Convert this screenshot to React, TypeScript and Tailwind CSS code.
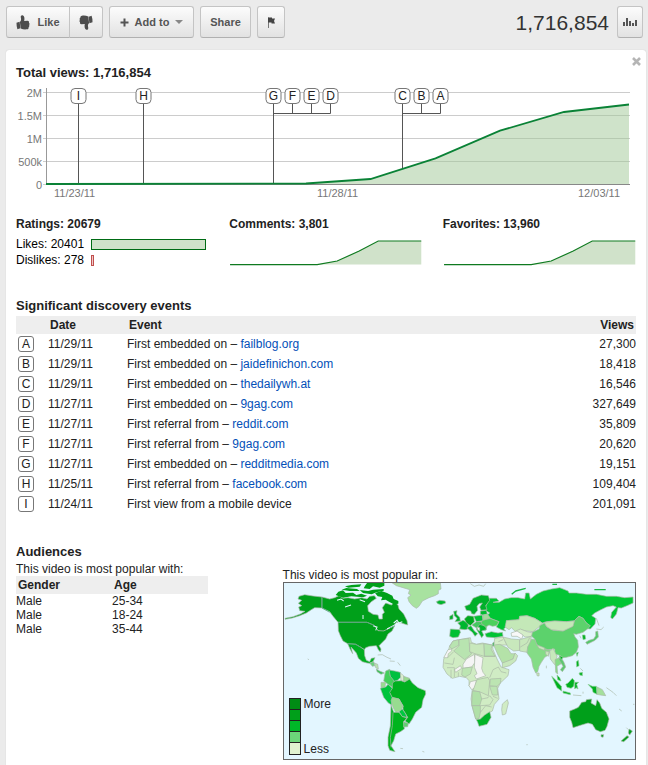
import { useState } from 'react';

interface DiscoveryEvent {
  id: string;
  date: string;
  label: string;
  site?: string;
  views: string;
}

const events: DiscoveryEvent[] = [
  { id: 'A', date: '11/29/11', label: 'First embedded on', site: 'failblog.org', views: '27,300' },
  { id: 'B', date: '11/29/11', label: 'First embedded on', site: 'jaidefinichon.com', views: '18,418' },
  { id: 'C', date: '11/29/11', label: 'First embedded on', site: 'thedailywh.at', views: '16,546' },
  { id: 'D', date: '11/27/11', label: 'First embedded on', site: '9gag.com', views: '327,649' },
  { id: 'E', date: '11/27/11', label: 'First referral from', site: 'reddit.com', views: '35,809' },
  { id: 'F', date: '11/27/11', label: 'First referral from', site: '9gag.com', views: '20,620' },
  { id: 'G', date: '11/27/11', label: 'First embedded on', site: 'redditmedia.com', views: '19,151' },
  { id: 'H', date: '11/25/11', label: 'First referral from', site: 'facebook.com', views: '109,404' },
  { id: 'I', date: '11/24/11', label: 'First view from a mobile device', views: '201,091' },
];

const audiences = [
  { gender: 'Male', age: '25-34' },
  { gender: 'Male', age: '18-24' },
  { gender: 'Male', age: '35-44' },
];

const ratings = [
  { name: 'Likes', count: 20401, bar: 'border-[#006b14] bg-[#d0e2ca]' },
  { name: 'Dislikes', count: 278, bar: 'border-[#c0504d] bg-[#f0c8c8]' },
];

const yTicks = [
  { label: '2M', y: 8.5 },
  { label: '1.5M', y: 31.5 },
  { label: '1M', y: 54.5 },
  { label: '500k', y: 77.5 },
  { label: '0', y: 100.5 },
];

const xTicks = [
  { label: '11/23/11', x: 38 },
  { label: '11/28/11', x: 301 },
  { label: '12/03/11', x: 562 },
];

const markers = [
  { id: 'I', x: 62.5 },
  { id: 'H', x: 127.5 },
  { id: 'G', x: 257.5 },
  { id: 'F', x: 276.5 },
  { id: 'E', x: 295.5 },
  { id: 'D', x: 314.5 },
  { id: 'C', x: 386.5 },
  { id: 'B', x: 405.5 },
  { id: 'A', x: 424.5 },
];

const button =
  'flex h-8 items-center justify-center border border-[#c4c4c4] border-b-[#b0b0b0] bg-linear-to-b from-[#fcfcfc] to-[#e2e2e2] text-[11px] font-bold text-[#555]';

function ThumbIcon({ down = false }: { down?: boolean }) {
  return (
    <svg
      viewBox="0 0 14 15"
      className={down ? 'h-[15px] w-[14px] rotate-180' : 'h-[15px] w-[14px]'}
      fill="#4d4d4d"
      aria-hidden="true"
    >
      <path d="M0.5 7.8L3.6 6.8L4.4 13.2L1.4 14.2Q0.4 11.5 0.5 7.8Z" />
      <path d="M3.9 7C5.2 5.8 5.3 4.6 4.8 2.6C4.5 1 5.4 0.1 6.6 0.3C8.4 0.7 8.8 3.4 8.2 5.9L11.6 5.8C12.8 5.8 13.4 6.9 12.9 7.8C13.7 8.4 13.7 9.5 13.1 10.1C13.6 11 13.3 11.8 12.6 12.2C12.8 13.3 12.2 14.2 11 14.3C8.9 14.6 6.6 14.4 4.7 13.4Z" />
    </svg>
  );
}

function Toolbar() {
  return (
    <header className="flex items-start gap-1.5 pr-[3px]">
      <div className="flex">
        <button className={`${button} w-[64px] gap-[7px] rounded-l-[3px]`}>
          <ThumbIcon />
          Like
        </button>
        <button aria-label="Dislike" className={`${button} -ml-px w-[34px] rounded-r-[3px]`}>
          <ThumbIcon down />
        </button>
      </div>
      <button className={`${button} w-[85px] gap-1.5 rounded-[3px]`}>
        <svg viewBox="0 0 9 9" className="h-[9px] w-[9px]" aria-hidden="true">
          <path d="M4.5 0.5V8.5M0.5 4.5H8.5" stroke="#555" strokeWidth="2" />
        </svg>
        Add to
        <svg viewBox="0 0 8 4" className="h-1 w-2" aria-hidden="true">
          <path d="M0 0H8L4 4Z" fill="#888" />
        </svg>
      </button>
      <button className={`${button} w-[51px] rounded-[3px]`}>Share</button>
      <button aria-label="Flag" className={`${button} w-7 rounded-[3px]`}>
        <svg viewBox="0 0 7 11" className="h-[11px] w-[7px]" aria-hidden="true">
          <path d="M0.5 0.5V11" stroke="#777" />
          <path d="M0 0.5H4V1.5H7L6 4L7 6.5H3.5V5.5H0Z" fill="#444" />
        </svg>
      </button>
      <span className="ml-auto text-[21px] leading-[34px] -mb-0.5 text-[#333]">1,716,854</span>
      <button aria-label="Statistics" className={`${button} ml-0.5 w-[26px] rounded-[3px]`}>
        <svg viewBox="0 0 14 10" className="h-[10px] w-[14px]" fill="#555" aria-hidden="true">
          <path d="M0 5h2v4H0zM3 1h2v8H3zM6 4h2v5H6zM9 6h2v3H9zM12 3h2v6h-2z" />
        </svg>
      </button>
    </header>
  );
}

function ViewsChart() {
  return (
    <svg viewBox="0 0 620 116" className="mt-[3px] block w-full" role="img" aria-label="Total views over time">
      {yTicks.map((t) => (
        <g key={t.label}>
          <path d={`M27 ${t.y}H614`} stroke="#ccc" />
          <text x="26" y={t.y + 4} textAnchor="end" fontSize="11" fill="#777">
            {t.label}
          </text>
        </g>
      ))}
      <path d="M30.5 4V101" stroke="#999" />
      {/* stems that tie the lettered markers to their date */}
      <path
        d="M62.5 20V100M127.5 20V100M257.5 20V100M257.5 29.5H314.5V20M276.5 20V29M295.5 20V29M386.5 20V84M386.5 29.5H424.5V20M405.5 20V29"
        fill="none"
        stroke="#555"
      />
      <path d="M30 100L290 99L354.5 95L419.5 74.3L484 46.7L548 28L613 20.5V100Z" fill="#a0c896" fillOpacity="0.5" />
      <path d="M30 100.5H614" stroke="#888" />
      <path
        d="M30 100L290 99.5L354.5 95L419.5 74.3L484 46.7L548 28L613 20.5"
        fill="none"
        stroke="#0a8236"
        strokeWidth="1.8"
      />
      {markers.map((m) => (
        <g key={m.id}>
          <rect x={m.x - 7.5} y="4.5" width="15" height="15" rx="4" fill="#fff" stroke="#777" />
          <text x={m.x} y="16" textAnchor="middle" fontSize="12" fill="#222">
            {m.id}
          </text>
        </g>
      ))}
      {xTicks.map((t) => (
        <text key={t.label} x={t.x} y="113" fontSize="11" fill="#777">
          {t.label}
        </text>
      ))}
    </svg>
  );
}

function Sparkline({ title }: { title: string }) {
  return (
    <div>
      <h3 className="text-[12px] leading-4 font-bold">{title}</h3>
      <svg viewBox="0 0 193 26" className="mt-2 block w-full" aria-hidden="true">
        <path d="M1 24.5H88L108 21L130 11L149 1H192V24.5Z" fill="#d0e2ca" />
        <path d="M1 24.5H88L108 21L130 11L149 1H192" fill="none" stroke="#0f7a20" strokeWidth="1.2" />
      </svg>
    </div>
  );
}

function Ratings() {
  return (
    <div>
      <h3 className="text-[12px] leading-4 font-bold">Ratings: 20679</h3>
      <div className="mt-1">
        {ratings.map((r) => (
          <div key={r.name} className="flex h-4 items-center text-[12px] leading-4 text-black">
            <span className="w-[75px] shrink-0">
              {r.name}: {r.count}
            </span>
            <span className="w-[115px]">
              <span
                className={`block h-[11px] min-w-[3px] border ${r.bar}`}
                style={{ width: `${(r.count / ratings[0].count) * 100}%` }}
              />
            </span>
          </div>
        ))}
      </div>
    </div>
  );
}

function EventsTable() {
  return (
    <section className="mt-[30px]">
      <h2 className="text-[13px] leading-4 font-bold">Significant discovery events</h2>
      <table className="mt-0.5 w-full text-left text-[12px]">
        <thead className="bg-[#eee] leading-[18px]">
          <tr>
            <th className="w-8" />
            <th className="w-[79px] p-0 pl-0.5 font-bold">Date</th>
            <th className="p-0 pl-0.5 font-bold">Event</th>
            <th className="p-0 pr-0.5 text-right font-bold">Views</th>
          </tr>
        </thead>
        <tbody className="leading-5">
          {events.map((e) => (
            <tr key={e.id} className="h-5">
              <td className="p-0 pl-0.5">
                <span className="flex h-4 w-4 items-center justify-center rounded-[3px] border border-[#777] leading-none">
                  {e.id}
                </span>
              </td>
              <td className="p-0">{e.date}</td>
              <td className="p-0">
                {e.label}
                {e.site && (
                  <>
                    {' – '}
                    <a href="#" className="text-[#0350b8]">
                      {e.site}
                    </a>
                  </>
                )}
              </td>
              <td className="p-0 text-right">{e.views}</td>
            </tr>
          ))}
        </tbody>
      </table>
    </section>
  );
}

function WorldMap() {
  return (
    <svg viewBox="13 52 1054 528" className="block w-full" role="img" aria-label="World map of popularity">
      <path d="M13 52H1067V580H13Z" fill="#e3f6ff" />
      <g stroke="#aab8aa" strokeWidth="2" strokeLinejoin="round">
        {/* Greenland, Iceland */}
        <path fill="#a8e2a0" d="M338 52H482L484 70L476 74V84L465 90L448 96L428 106L418 122L410 128L398 120L388 108L384 96L394 88L386 84L390 72L370 66L350 60Z" />
        <path fill="#00b62e" d="M470 108L480 104L496 106L498 112L484 117L474 114Z" />
        {/* Canada, Alaska, USA */}
        <path fill="#00a01a" d="M58 92L75 87L100 91L127 94V127L105 126L95 132L80 142L60 150L38 157L16 161V158L40 153L62 145L76 137L60 135L57 124L66 120L56 113L66 104L55 100Z" />
        <path fill="#00a01a" d="M127 94L150 100L165 96L178 90L190 98L205 96L225 100L245 96L262 100L270 92L284 90L290 98L275 108L264 120L266 137L280 146L295 148L298 160H308V146L314 140L308 126L318 112L335 118L345 110L355 118L358 130L372 145L382 165L384 178L365 172L350 170L342 180L330 188L310 197L295 195L285 180L262 170H175L160 152L150 138L127 127Z" />
        <path fill="#00a01a" d="M175 170H262L285 180L295 195L312 196L330 187L345 180L337 196L325 205L318 220L306 232L298 240L304 250L302 259L296 252L290 240L270 242L258 246L254 252L245 246L228 236L204 234L190 226L182 210L176 195Z" />
        {/* Mexico and Central America */}
        <path fill="#00ae22" d="M204 234L228 236L245 246L254 252L255 270L260 284L270 288L275 278L286 276L280 288L270 293L262 292L248 288L236 278L230 262L214 244L219 264L211 250Z" />
        <path fill="#6cd080" d="M270 292L282 288L286 300L278 302Z" />
        <path fill="#b8e4b0" d="M284 292L294 296L296 310L288 306Z" />
        <path fill="#38c058" d="M290 310L300 316L314 322L304 326L292 318Z" />
        <path fill="none" d="M294 268L308 267L322 275L334 280M330 286L345 287M354 290L362 300" />
        {/* South America */}
        <path fill="#44cf5c" d="M318 316L330 311L332 330L344 345L340 366L325 356L312 346L315 328Z" />
        <path fill="#00c040" d="M328 313L345 316L362 320L364 334L352 345L344 347L332 332Z" />
        <path fill="#dcefd0" d="M362 322L372 330V347L364 345Z" />
        <path fill="#98dc90" d="M372 332L390 338L386 348L372 347Z" />
        <path fill="#98dc90" d="M304 350L318 350L316 364L304 366Z" />
        <path fill="#00c43c" d="M302 368L318 364L325 356L338 368L332 382L338 395L336 418L326 412L312 395Z" />
        <path fill="#00b020" d="M338 352L346 346L364 345L375 349L390 340L398 352L415 366L437 375L438 385L430 402L426 425L408 440L398 460L388 475L376 466L384 455L370 432V420L358 400L338 396L330 380L338 368Z" />
        <path fill="#98dc90" d="M338 395L358 400L370 422L364 435L348 440L340 425L334 405Z" />
        <path fill="#00c840" d="M358 438L368 430L378 445L382 455L368 453Z" />
        <path fill="#00b41e" d="M334 418L342 440H358L368 453L382 456L372 468L374 490L362 498L348 505L342 525L334 540L346 558L330 554L325 540V515L332 480Z" />
        <path fill="#60d070" d="M372 468L386 473L384 483L372 484Z" />
        <path fill="none" d="M340 440L338 480L332 515L334 545M362 548L370 549M428 557L434 559M84 280L88 282" />
      </g>
      {/* Arctic archipelago */}
      <g fill="#00a01a">
        <path d="M168 88L176 78L190 74L198 82L220 81L230 88L245 84L262 90L250 95L215 92L190 96Z" />
        <path d="M186 72L200 67L232 70L240 76H210Z" />
        <path d="M196 62L215 58L245 56L240 63L206 66Z" />
        <path d="M262 52H314V60L300 66L280 62L270 70L252 68L256 60Z" />
        <path d="M240 73L265 76L280 72L312 70V75L290 80L276 86L250 82Z" />
        <path d="M286 82L305 76L322 82L338 90L342 100L356 106V114L342 116L328 108L318 102L304 104L308 94L294 92Z" />
      </g>
      <path d="M172 104L184 100L192 106M196 124L214 118M240 102L256 108M300 118L312 114M250 148V160M280 180L292 184L288 194M322 190L345 178M342 172L352 164L358 172L368 168" fill="none" stroke="#e3f6ff" strokeWidth="3" />
      <path d="M127 94V127L150 140M175 170H262L285 180M330 187L345 180M204 234L228 236L245 246" fill="none" stroke="#489f78" strokeWidth="2" />

      <g transform="translate(480 0)" stroke="#a9b8a6" strokeWidth="2" strokeLinejoin="round">
        {/* Russia */}
        <path fill="#00c634" d="M138 122L150 98L170 98L178 106L160 110L178 110L195 100L215 96L235 96L255 100L258 82L268 82L272 100L290 86L310 76L335 70L360 66L385 76L388 82L410 82L440 86L470 86L500 92L530 92L555 96L580 94V112L562 120L545 127L535 126L530 145L518 160L513 155L516 140L530 124L520 120L500 124L480 134L465 142L456 150L468 158L466 175L452 190L440 188L450 180L440 172L430 158L418 152L404 165L380 168L345 166L320 168L308 172L285 158L262 150L240 152L238 162L200 165L204 178L192 190L198 196L185 192L170 184L178 168L152 158L143 148L150 142L138 134Z" />
        <path fill="none" stroke="#1bb845" strokeWidth="4" d="M216 86L228 76L258 68M338 56L352 56M464 72L498 72" />
        {/* Scandinavia and the rest of Europe */}
        <path fill="#00b02a" d="M75 122L90 116L100 98L125 88L146 90L150 104L138 120L142 132L124 134L120 124L128 112L118 114L112 122L114 134L104 146L96 144L93 136L80 134Z" />
        <path fill="#00ad28" d="M42 137L52 135L50 145L60 155L62 166L46 168L52 158L44 150Z" />
        <path fill="#00ad28" d="M30 152L40 146V160L30 162Z" />
        <path fill="#00b62e" d="M54 172L70 164L82 170L86 178L84 190L76 192L60 190L62 180Z" />
        <path fill="#00c034" d="M32 190L60 192L62 200L56 214L40 216L30 212Z" />
        <path fill="#00aa20" d="M74 160L84 150L102 152L104 168L92 180L80 172Z" />
        <path fill="#00c034" d="M102 152L128 148L130 165L110 168Z" />
        <path fill="#00bb30" d="M122 136L140 134L143 146L130 148L122 146Z" />
        <path fill="#00b62e" d="M82 186L94 180L104 196L114 204L106 212L98 200L88 192Z" />
        <path fill="#46c860" d="M96 178L110 168L130 168L142 180L138 194L122 192L112 188Z" />
        <path fill="#00b62e" d="M120 176L138 182L140 192L126 196L132 208L126 216L116 200L110 190Z" />
        <path fill="#f5f5f5" d="M112 184L120 186V196L114 192Z" />
        <path fill="#4cd05e" d="M128 164L150 158L178 168L170 180L158 182L148 178L138 184L124 172Z" />
        <path fill="#a0dc98" d="M130 148L143 145L152 158L130 163Z" />
        <path fill="#00c434" d="M136 204L155 198L175 202L188 200L190 212L165 216L140 214Z" />
        {/* Africa */}
        <path fill="#d0ecc4" d="M40 226L70 220L92 216L95 230L110 236L128 232L158 238L160 252L172 280L184 304L208 312L205 330L182 352L174 368L178 400L164 416L158 436L150 440L120 462L108 460L98 425L94 400L98 372L88 360V345L80 336L60 332L38 338L22 325L10 305L12 280L26 255L30 240Z" />
        <path fill="#b8e4b0" d="M40 226L56 222L58 238L36 250L30 242Z" />
        <path fill="#f5f5f5" d="M12 276L25 252L36 250V256L26 264L24 276Z" />
        <path fill="#b8e4b0" d="M58 222L88 218L90 258L96 264L75 282L42 256L58 240Z" />
        <path fill="#b8e4b0" d="M132 234L158 238L154 250L166 272H134Z" />
        <path fill="#c8e8bc" d="M90 232L110 236L132 234L134 272L106 264L90 258Z" />
        <path fill="#f5f5f5" d="M70 296L80 280L104 266L106 290L96 304L70 308Z" />
        <path fill="#f5f5f5" d="M106 266L130 276L126 308L130 320L138 330L110 340L104 330L112 324L104 305Z" />
        <path fill="#f5f5f5" d="M44 312L62 300L66 308L48 320Z" />
        <path fill="#bce5b2" d="M68 308L98 304L92 325L76 334L66 328Z" />
        <path fill="#f5f5f5" d="M92 348L110 344L106 366L96 372L88 360Z" />
        <path fill="#c8e8bc" d="M112 342L145 335L150 345L146 390L124 380L100 374Z" />
        <path fill="#b0e0a8" d="M98 376L120 378L126 400L120 420H96Z" />
        <path fill="#b0e0a8" d="M97 420H122V440L118 458L108 460Z" />
        <path fill="#bce5b2" d="M150 362L172 360L174 388L158 388Z" />
        <path fill="#bce5b2" d="M152 340L184 338L182 352L172 362L150 360Z" />
        <path fill="none" d="M134 272H168M24 276L42 258M14 292L40 296L44 276M22 306H44V334M56 320V332M160 312L176 304L184 318L200 322M150 336L160 312M126 400L145 396L150 390L160 402L150 418L122 420M122 440L138 420L156 424M160 392L174 398M34 312V338" />
        <path fill="#00b428" d="M110 462L122 460L135 448L150 438L154 455L142 476L118 482L114 470Z" />
        <path fill="#d0ecc4" d="M188 415L203 402L206 412L198 445L188 448L186 432Z" />
        {/* Middle East */}
        <path fill="#d4edc8" d="M165 218L190 214L202 238L180 238L162 240Z" />
        <path fill="#b4e2a8" d="M162 238L180 236L204 248L214 264L226 264L220 280L200 290L188 292L175 268Z" />
        <path fill="#c8e8bc" d="M188 292L220 280L226 262L234 270L228 286L210 300L188 306Z" />
        <path fill="#00b62e" d="M159 232L163 230L162 242L159 240Z" />
        <path fill="#c8e8bc" d="M190 214L215 220L240 222V254L222 256L205 245Z" />
        <path fill="#c8e8bc" d="M240 222L275 212L272 232L264 244L262 260L240 256Z" />
        <path fill="none" d="M176 228L190 222M242 244L262 232L270 216" />
        {/* Central Asia, China, India */}
        <path fill="#c4e8b8" d="M200 165L238 162L240 152L262 150L285 158L308 172L300 182L280 198L262 196L240 192L230 200L215 186L208 192L196 184Z" />
        <path fill="#d4edc8" d="M228 196L242 190L262 198L280 202L274 212L256 214L246 206Z" />
        <path fill="#f8f8f8" d="M214 202L232 196L250 208L246 220L232 212L216 212Z" />
        <path fill="#5cd26c" d="M278 200L298 190L300 180L314 172L322 184L340 194L370 196L398 182L404 165L418 152L430 158L440 172L452 180L446 188L430 200L410 206L402 204L406 214L414 224L416 244L410 260L398 270L380 275L370 276L358 268L345 266V250L325 252L300 244L290 235L285 220L276 212Z" />
        <path fill="#c4e8b8" d="M314 170L345 166L380 168L404 166L400 182L370 196L335 192L320 182Z" />
        <path fill="#84dc86" d="M264 244L276 220L286 222L292 238L315 250L332 254L326 268L315 275L305 290L298 302L294 318L288 322L280 305L275 280L262 262Z" />
        <path fill="#c8e8bc" d="M292 238L314 246V254L298 248ZM318 256L328 258L326 272L318 266ZM291 322L298 322L298 331L292 330Z" />
        {/* South-east Asia and Japan */}
        <path fill="#c8e8bc" d="M330 258L340 248L352 272L348 284L350 300L344 296L332 280Z" />
        <path fill="#84dc86" d="M346 282L358 276L368 292L358 298L352 302L354 325L348 320Z" />
        <path fill="#5cc870" d="M360 270L372 288L378 304L368 318L362 312L370 302L358 282Z" />
        <g fill="#00b020" stroke="#8fcf98">
          <path d="M358 270L370 274L366 282Z" />
          <path d="M352 328L360 336L364 346L354 342Z" />
          <path d="M336 332L350 345L365 362L366 376L352 366Z" />
          <path d="M370 376L392 382V387L370 382Z" />
          <path d="M378 356L385 352L398 338L404 345L402 362L394 368L382 365Z" />
          <path d="M405 350L417 350L411 356L415 370L409 366L405 370Z" />
          <path d="M445 356L458 362L470 362L472 386L460 380L458 370Z" />
          <path d="M410 288L416 284L418 300L411 304Z" />
          <path d="M418 322L428 320V330L420 328Z" />
          <path d="M410 262L416 260L412 272Z" />
          <path d="M428 208L436 208L438 220L430 222Z" />
        </g>
        <path fill="#a4e09c" d="M472 364L488 372L498 390L482 388L472 386Z" />
        <path fill="#50c868" d="M438 230L448 224L462 220L468 210V198L474 196L476 214L466 224L442 236Z" />
        <path fill="none" d="M470 190L484 192L492 184M470 158L478 180M400 388L425 390M430 378V384M500 366L520 380L530 390M538 430L546 436M560 486L566 492M422 308L430 316M320 300V308M260 537H264M420 210L424 218M580 416H584" />
        {/* Oceania */}
        <path fill="#009f1a" d="M390 436L405 430L416 425L426 410L438 408L440 402L456 400L454 412L468 420L472 402L480 412L486 428L500 440L508 460L502 482L496 494L482 498L468 492L458 476L445 472L425 478L400 486L396 470L390 455Z" />
        <path fill="#009f1a" d="M484 507H492L490 515L484 513ZM568 490L578 496L570 508L566 502ZM544 526L562 510L568 514L552 528Z" />
        <path fill="none" d="M92 54L104 62L118 58L132 62L138 54" />
      </g>
    </svg>
  );
}

function Audiences() {
  return (
    <section className="mt-[30px] flex items-start justify-between">
      <div className="w-[31%]">
        <h2 className="text-[13px] leading-4 font-bold">Audiences</h2>
        <p className="pt-0.5 text-[12px] leading-[14px] whitespace-nowrap">This video is most popular with:</p>
        <table className="w-full text-left text-[12px]">
          <thead className="bg-[#eee] leading-[18px]">
            <tr>
              <th className="w-1/2 p-0 pl-0.5 font-bold">Gender</th>
              <th className="p-0 pl-0.5 font-bold">Age</th>
            </tr>
          </thead>
          <tbody className="leading-[14px]">
            {audiences.map((a) => (
              <tr key={a.age}>
                <td className="p-0">{a.gender}</td>
                <td className="p-0">{a.age}</td>
              </tr>
            ))}
          </tbody>
        </table>
      </div>
      <div className="w-[57%] pt-6">
        <p className="text-[12px] leading-[14px]">This video is most popular in:</p>
        <div className="relative border border-[#666]">
          <WorldMap />
          <div className="absolute bottom-1 left-[5px] flex gap-[3px] text-[12px] leading-3">
            <div className="flex w-3 flex-col divide-y divide-[#222] border border-[#222]">
              <span className="h-[11px] bg-[#008c14]" />
              <span className="h-[11px] bg-[#009f1a]" />
              <span className="h-[11px] bg-[#00b828]" />
              <span className="h-[11px] bg-[#6cd67a]" />
              <span className="h-[11px] bg-[#e0f2d0]" />
            </div>
            <div className="flex flex-col justify-between">
              <span>More</span>
              <span>Less</span>
            </div>
          </div>
        </div>
      </div>
    </section>
  );
}

export default function App() {
  const [open, setOpen] = useState(true);

  return (
    <div className="flex min-h-screen flex-col bg-[#ebebeb] pt-1.5 pr-0.5 pl-1.5 font-['Liberation_Sans',Arial,sans-serif] text-[#222]">
      <Toolbar />
      {open && (
        <main className="relative mt-3 grow rounded-t-[3px] bg-white px-2.5 pt-[15px] pb-1.5 shadow-[0_0_1px_#bbb]">
          <button aria-label="Close" onClick={() => setOpen(false)} className="absolute top-[7px] right-[5px]">
            <svg viewBox="0 0 9 9" className="h-[9px] w-[9px]" aria-hidden="true">
              <path d="M1 1L8 8M8 1L1 8" stroke="#b5b5b5" strokeWidth="2.6" />
            </svg>
          </button>
          <h2 className="text-[13px] leading-4 font-bold">Total views: 1,716,854</h2>
          <ViewsChart />
          <div className="mt-4 grid grid-cols-3 gap-5">
            <Ratings />
            <Sparkline title="Comments: 3,801" />
            <Sparkline title="Favorites: 13,960" />
          </div>
          <EventsTable />
          <Audiences />
        </main>
      )}
    </div>
  );
}
